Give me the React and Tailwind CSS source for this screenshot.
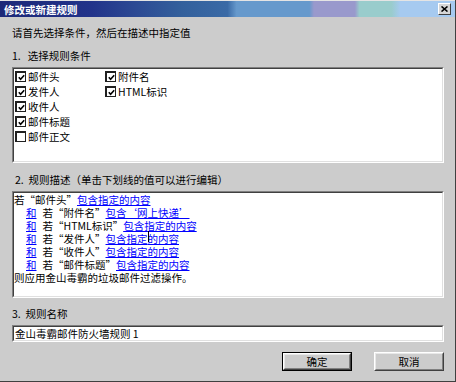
import React from "react";

const font = { fontFamily: '"Noto Sans CJK SC", "Noto Sans", sans-serif' };

function Check({ checked }) {
  return (
    <span className="inline-flex w-[11px] h-[11px] bg-white border-t-2 border-l-2 border-b border-r border-[#202020] items-center justify-center shrink-0">
      {checked && (
        <svg width="7" height="7" viewBox="0 0 7 7">
          <polyline points="0.8,3.2 2.6,5.2 6.2,1.2" fill="none" stroke="#000" strokeWidth="1.6" />
        </svg>
      )}
    </span>
  );
}

function Row({ checked, label }) {
  return (
    <div className="flex items-center h-[15px]">
      <Check checked={checked} />
      <span className="ml-[2px] leading-[13px]">{label}</span>
    </div>
  );
}

function Sunken({ className, children }) {
  return (
    <div className={"border border-t-[#808080] border-l-[#808080] border-b-white border-r-white " + className}>
      <div className="h-full border border-t-[#404040] border-l-[#404040] border-b-[#e0e0e0] border-r-[#e0e0e0] bg-white">
        {children}
      </div>
    </div>
  );
}

function L({ children }) {
  return <span className="text-[#0000ff] underline underline-offset-[1px] leading-[13px]">{children}</span>;
}

function T({ className = "", children }) {
  return <span className={"leading-[13px] " + className}>{children}</span>;
}

function Line({ indent, children }) {
  return (
    <div className={"flex items-center h-[13px] whitespace-nowrap " + (indent ? "pl-[12px]" : "")}>{children}</div>
  );
}

function Btn({ def, children }) {
  const inner = (
    <div className="h-full border border-t-white border-l-white border-b-[#404040] border-r-[#404040]">
      <div className="h-full border border-t-[#e8e8e8] border-l-[#e8e8e8] border-b-[#808080] border-r-[#808080] flex items-center justify-center leading-[13px]">
        {children}
      </div>
    </div>
  );
  return (
    <div className={"w-[70px] h-[19px] " + (def ? "border border-black" : "")}>{inner}</div>
  );
}

export default function App() {
  return (
    <div lang="zh-CN" style={font} className="w-[456px] h-[382px] bg-[#cccccc] border-b border-r border-[#404040] text-[10.5px] text-black leading-[14px] overflow-hidden">
      <div className="h-px bg-[#e4e4e4]" />
      <div className="h-[16px] flex items-center justify-between pl-[4px] pr-[4px] bg-[linear-gradient(90deg,#1c2878_0%,#22338a_20%,#2c4a94_30%,#33609c_40%,#3a6aa6_50%,#6699cc_52%,#6699cc_68%,#9999cc_69%,#9999cc_78%,#99cccc_79%,#99cccc_86%,#a6caf0_88%,#a6caf0_100%)]">
        <span className="text-white font-bold text-[10.5px] leading-[13px]">修改或新建规则</span>
        <div className="w-[13px] h-[12px] bg-[#d6d6d6] border border-t-white border-l-white border-b-[#404040] border-r-[#404040] flex items-center justify-center">
          <svg width="7" height="6" viewBox="0 0 7 6">
            <path d="M0.5 0.5 L6.5 5.5 M6.5 0.5 L0.5 5.5" stroke="#000" strokeWidth="1.6" />
          </svg>
        </div>
      </div>
      <div className="pl-[12px] pr-[11px]">
        <div className="mt-[9px] h-[14px]">请首先选择条件，然后在描述中指定值</div>
        <div className="mt-[9px] h-[14px]">1.&nbsp;&nbsp;&nbsp;选择规则条件</div>
        <Sunken className="mt-[4px] h-[96px]">
          <div className="flex pl-px">
            <div className="w-[90px]">
              <Row checked label="邮件头" />
              <Row checked label="发件人" />
              <Row checked label="收件人" />
              <Row checked label="邮件标题" />
              <Row label="邮件正文" />
            </div>
            <div>
              <Row checked label="附件名" />
              <Row checked label="HTML标识" />
            </div>
          </div>
        </Sunken>
        <div className="mt-[10px] h-[14px] pl-[3px]">2.&nbsp;&nbsp;规则描述（单击下划线的值可以进行编辑）</div>
        <Sunken className="mt-[4px] h-[107px]">
          <div>
            <Line><T>若“邮件头”</T><L>包含指定的内容</L></Line>
            <Line indent><L>和</L><T className="ml-[6px]">若“附件名”</T><L>包含‘网上快递’</L></Line>
            <Line indent><L>和</L><T className="ml-[6px]">若“HTML标识”</T><L>包含指定的内容</L></Line>
            <Line indent><L>和</L><T className="ml-[6px]">若“发件人”</T><L>包含指定<span className="relative">的<span className="absolute left-0 top-0 w-px h-[11px] bg-black" /></span>内容</L></Line>
            <Line indent><L>和</L><T className="ml-[6px]">若“收件人”</T><L>包含指定的内容</L></Line>
            <Line indent><L>和</L><T className="ml-[6px]">若“邮件标题”</T><L>包含指定的内容</L></Line>
            <Line><T>则应用金山毒霸的垃圾邮件过滤操作。</T></Line>
          </div>
        </Sunken>
        <div className="mt-[9px] h-[14px]">3.&nbsp;&nbsp;规则名称</div>
        <Sunken className="mt-[4px] h-[17px]">
          <div className="leading-[13px] pl-px">金山毒霸邮件防火墙规则 1</div>
        </Sunken>
        <div className="mt-[10px] flex justify-end gap-[22px]">
          <Btn def>确定</Btn>
          <Btn>取消</Btn>
        </div>
      </div>
    </div>
  );
}
